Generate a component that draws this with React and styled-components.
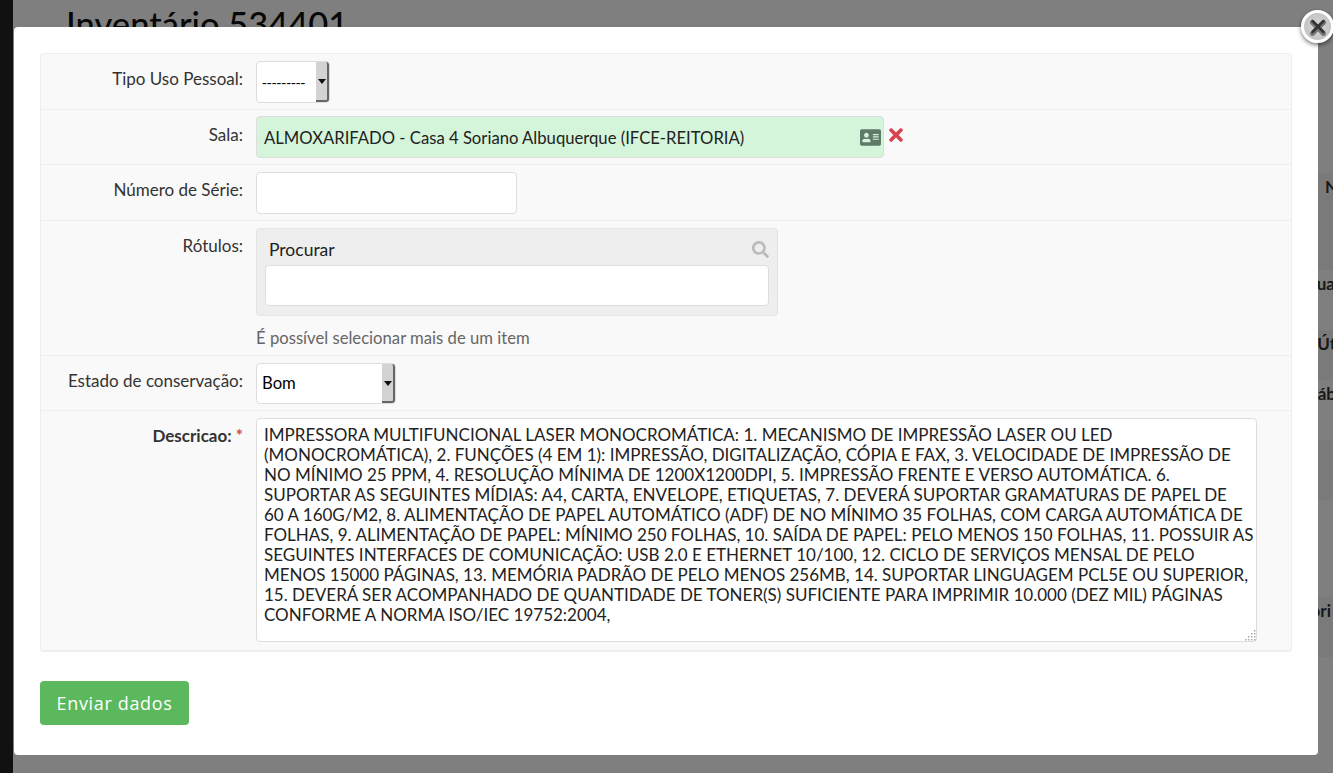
import React from 'react'
import styled, { createGlobalStyle } from 'styled-components'
import { FaAddressCard, FaTimes, FaSearch } from 'react-icons/fa'

const Global = createGlobalStyle`
  html, body { margin: 0; height: 100%; overflow: hidden; background: #fff; }
  body { font-family: "Lato", "Liberation Sans", sans-serif; color: #333; }
  * { box-sizing: border-box; }
`

const DESCRICAO = [
  'IMPRESSORA MULTIFUNCIONAL LASER MONOCROMÁTICA: 1. MECANISMO DE IMPRESSÃO LASER OU LED',
  '(MONOCROMÁTICA), 2. FUNÇÕES (4 EM 1): IMPRESSÃO, DIGITALIZAÇÃO, CÓPIA E FAX, 3. VELOCIDADE DE IMPRESSÃO DE',
  'NO MÍNIMO 25 PPM, 4. RESOLUÇÃO MÍNIMA DE 1200X1200DPI, 5. IMPRESSÃO FRENTE E VERSO AUTOMÁTICA. 6.',
  'SUPORTAR AS SEGUINTES MÍDIAS: A4, CARTA, ENVELOPE, ETIQUETAS, 7. DEVERÁ SUPORTAR GRAMATURAS DE PAPEL DE',
  '60 A 160G/M2, 8. ALIMENTAÇÃO DE PAPEL AUTOMÁTICO (ADF) DE NO MÍNIMO 35 FOLHAS, COM CARGA AUTOMÁTICA DE',
  'FOLHAS, 9. ALIMENTAÇÃO DE PAPEL: MÍNIMO 250 FOLHAS, 10. SAÍDA DE PAPEL: PELO MENOS 150 FOLHAS, 11. POSSUIR AS',
  'SEGUINTES INTERFACES DE COMUNICAÇÃO: USB 2.0 E ETHERNET 10/100, 12. CICLO DE SERVIÇOS MENSAL DE PELO',
  'MENOS 15000 PÁGINAS, 13. MEMÓRIA PADRÃO DE PELO MENOS 256MB, 14. SUPORTAR LINGUAGEM PCL5E OU SUPERIOR,',
  '15. DEVERÁ SER ACOMPANHADO DE QUANTIDADE DE TONER(S) SUFICIENTE PARA IMPRIMIR 10.000 (DEZ MIL) PÁGINAS',
  'CONFORME A NORMA ISO/IEC 19752:2004,',
].join('\n')

// pagina por tras do modal, quase toda escondida
const Page = styled.div`
  display: flex;
  height: 773px;
  overflow: hidden;
`
const Sidebar = styled.div`
  width: 13px;
  flex: none;
  background: #222;
`
const Content = styled.div`
  flex: 1;
  padding: 4px 0 0 53px;
  overflow: hidden;
`
const Title = styled.h1`
  margin: 0;
  font-size: 34.5px;
  line-height: 40px;
  font-weight: 500;
  color: #111;
`
const BackList = styled.div`
  display: flex;
  flex-direction: column;
  margin-top: 69px;
  width: 1272px;
`
const BackRow = styled.div`
  height: ${p => p.$h}px;
  padding-top: 4px;
  padding-right: ${p => p.$pr || 0}px;
  font-size: 17px;
  line-height: 20px;
  font-weight: 700;
  color: #333;
  white-space: nowrap;
  text-align: right;
  background: ${p => (p.$odd ? '#f5f5f5' : '#fff')};
`

const Overlay = styled.div`
  position: fixed;
  inset: 0;
  background: rgba(0, 0, 0, 0.5);
`
const Modal = styled.div`
  position: fixed;
  left: 14px;
  top: 27px;
  width: 1304px;
  height: 728px;
  background: #fff;
  border-radius: 4px;
  padding: 26px 26px 0 26px;
`
const Close = styled.button`
  position: absolute;
  right: -16px;
  top: -17px;
  width: 33px;
  height: 33px;
  padding: 0;
  border: 3px solid #fff;
  border-radius: 50%;
  background: radial-gradient(circle, #d8d8d8 0%, #bcbcbc 100%);
  box-shadow: 0 2px 4px rgba(0, 0, 0, 0.55);
  display: flex;
  align-items: center;
  justify-content: center;
`
const Fieldset = styled.div`
  background: #f9f9f9;
  border: 1px solid #eee;
  border-bottom-width: 2px;
  border-radius: 4px;
  display: flex;
  flex-direction: column;
`
const Row = styled.div`
  display: flex;
  align-items: flex-start;
  gap: 13px;
  padding: 7px 0 6px;
  border-bottom: 1px solid #eee;
  &:last-child { border-bottom: none; padding-bottom: 7.5px; }
`
const Label = styled.label`
  width: 202px;
  flex: none;
  text-align: right;
  font-size: 17px;
  line-height: 20px;
  padding-top: 8px;
  color: #333;
  font-weight: ${p => (p.$required ? 700 : 400)};
`
const Req = styled.span`
  color: #d9434e;
`
const SelectWrap = styled.div`
  position: relative;
  width: ${p => p.$w}px;
  height: 41.5px;
`
const Select = styled.select`
  appearance: none;
  width: 100%;
  height: 100%;
  border: 1px solid #ddd;
  border-radius: 4px;
  background: #fff;
  font-family: ${p => (p.$blank ? '"Open Sans"' : '"Lato"')}, sans-serif;
  font-size: ${p => (p.$blank ? '15px' : '16.67px')};
  color: #000;
  padding: 0 5px;
`
const SelectArrow = styled.span`
  position: absolute;
  right: 1px;
  top: 1px;
  bottom: 1px;
  width: 13px;
  background: #d3d3d3;
  border-right: 2px solid #666;
  border-bottom: 2px solid #666;
  border-top-right-radius: 3px;
  border-bottom-right-radius: 3px;
  pointer-events: none;
  &::after {
    content: '';
    position: absolute;
    left: 2px;
    top: 17px;
    border-left: 4px solid transparent;
    border-right: 4px solid transparent;
    border-top: 5px solid #111;
  }
`
const SalaRow = styled.div`
  display: flex;
  align-items: center;
  gap: 2px;
`
const Sala = styled.div`
  width: 628px;
  height: 42px;
  margin-top: -0.5px;
  background: #d5f5da;
  border: 1px solid #ddd;
  border-radius: 4px;
  padding: 1px 1px 0 7px;
  display: flex;
  align-items: center;
  justify-content: space-between;
  font-size: 16.67px;
  color: #222;
  svg { color: #5f7a66; font-size: 21px; margin-right: 1px; }
`
const Remove = styled.span`
  display: flex;
  color: #d9434e;
  font-size: 20px;
  margin-top: -4px;
`
const Input = styled.input`
  display: block;
  width: ${p => p.$w};
  height: 41.5px;
  border: 1px solid #ddd;
  border-radius: 4px;
  background: #fff;
`
const Stack = styled.div`
  display: flex;
  flex-direction: column;
`
const SearchBox = styled.div`
  width: 522px;
  height: 88px;
  background: #eee;
  border: 1px solid #e4e4e4;
  border-radius: 4px;
  padding: 7px 8px 8px 8px;
`
const SearchHead = styled.div`
  display: flex;
  align-items: center;
  justify-content: space-between;
  height: 27px;
  margin-bottom: 2px;
  padding: 0 0 0 4px;
  font-size: 17.5px;
  color: #222;
  svg { color: #bbb; font-size: 17px; }
`
const Hint = styled.div`
  margin-top: 12px;
  font-size: 16.67px;
  line-height: 21px;
  color: #666;
`
const DescricaoWrap = styled.div`
  position: relative;
  width: 1001px;
  height: 224px;
`
const Descricao = styled.textarea`
  display: block;
  width: 100%;
  height: 100%;
  border: 1px solid #ddd;
  border-radius: 4px;
  background: #fff;
  font-family: "Lato", sans-serif;
  font-size: 17px;
  line-height: 20px;
  color: #222;
  padding: 6px 7px;
  overflow: hidden;
  resize: none;
  white-space: pre;
`
const Grip = styled.svg`
  position: absolute;
  right: 1px;
  bottom: 1px;
`
const Submit = styled.button`
  display: block;
  margin-top: 29px;
  width: 149px;
  height: 44px;
  border: none;
  border-radius: 4px;
  background: #5cb85c;
  color: #fff;
  font-family: "Open Sans", sans-serif;
  font-size: 18px;
  letter-spacing: 0.65px;
`

const backRows = [
  { h: 60, text: '' },
  { h: 97, text: 'N', odd: true },
  { h: 60, text: 'lua', pr: 3 },
  { h: 50, text: 'Út', odd: true, pr: 2 },
  { h: 60, text: 'áb', pr: 2 },
  { h: 60, text: '', odd: true },
  { h: 97, text: '' },
  { h: 60, text: 'ori', odd: true, pr: 7 },
]

const gripDots = [[9, 0], [9, 3], [6, 3], [9, 6], [6, 6], [3, 6], [9, 9], [6, 9], [3, 9], [0, 9]]

export default function App() {
  return (
    <>
      <Global />
      <Page>
        <Sidebar />
        <Content>
          <Title>Inventário 534401</Title>
          <BackList>
            {backRows.map((r, i) => (
              <BackRow key={i} $h={r.h} $odd={r.odd} $pr={r.pr}>{r.text}</BackRow>
            ))}
          </BackList>
        </Content>
      </Page>
      <Overlay />
      <Modal>
        <Close aria-label="Fechar">
          <svg width="18" height="18" viewBox="0 0 18 18">
            <path d="M3.5 4.5 L14.5 15.5 M14.5 4.5 L3.5 15.5" stroke="#777" strokeWidth="5" strokeLinecap="round" />
            <path d="M3.5 3 L14.5 14 M14.5 3 L3.5 14" stroke="#333" strokeWidth="2.5" strokeLinecap="round" />
          </svg>
        </Close>
        <Fieldset>
          <Row>
            <Label>Tipo Uso Pessoal:</Label>
            <SelectWrap $w={74}>
              <Select $blank defaultValue=""><option value="">---------</option></Select>
              <SelectArrow />
            </SelectWrap>
          </Row>
          <Row>
            <Label>Sala:</Label>
            <SalaRow>
              <Sala>
                ALMOXARIFADO - Casa 4 Soriano Albuquerque (IFCE-REITORIA)
                <FaAddressCard />
              </Sala>
              <Remove><FaTimes /></Remove>
            </SalaRow>
          </Row>
          <Row>
            <Label>Número de Série:</Label>
            <Input $w="261px" />
          </Row>
          <Row>
            <Label>Rótulos:</Label>
            <Stack>
              <SearchBox>
                <SearchHead>Procurar<FaSearch /></SearchHead>
                <Input $w="100%" />
              </SearchBox>
              <Hint>É possível selecionar mais de um item</Hint>
            </Stack>
          </Row>
          <Row>
            <Label>Estado de conservação:</Label>
            <SelectWrap $w={139.5}>
              <Select defaultValue="bom"><option value="bom">Bom</option></Select>
              <SelectArrow />
            </SelectWrap>
          </Row>
          <Row>
            <Label $required>Descricao: <Req>*</Req></Label>
            <DescricaoWrap>
              <Descricao defaultValue={DESCRICAO} readOnly />
              <Grip width="11" height="11" viewBox="0 0 11 11">
                {gripDots.map(([x, y]) => (
                  <rect key={`${x}-${y}`} x={x} y={y} width="1.5" height="1.5" fill="#aaa" />
                ))}
              </Grip>
            </DescricaoWrap>
          </Row>
        </Fieldset>
        <Submit>Enviar dados</Submit>
      </Modal>
    </>
  )
}
